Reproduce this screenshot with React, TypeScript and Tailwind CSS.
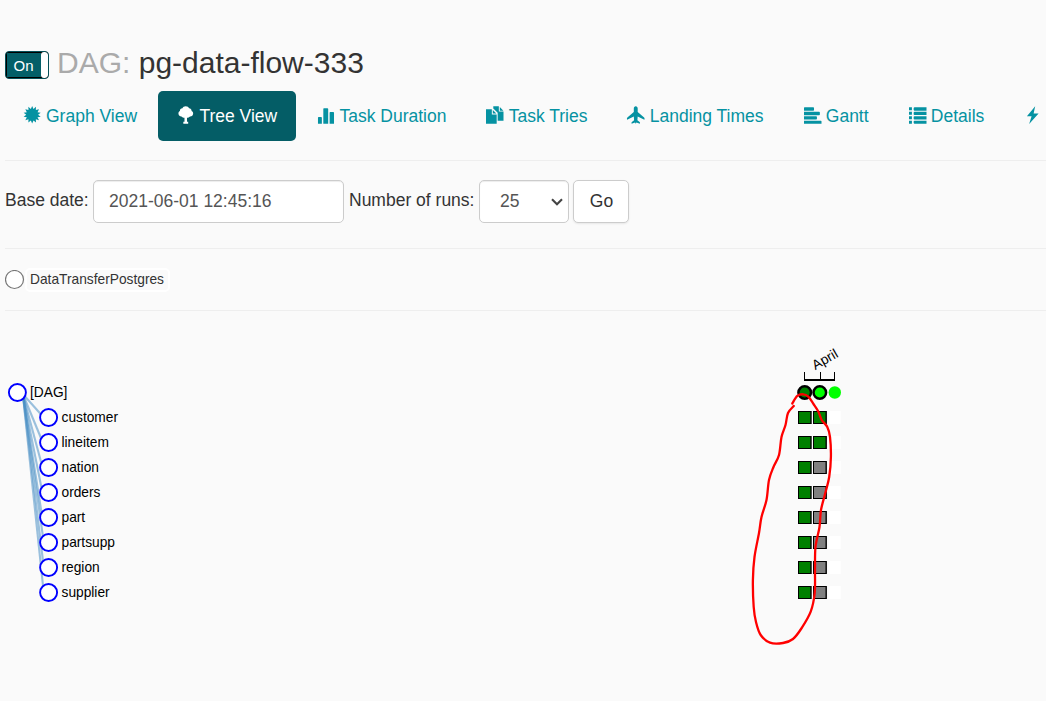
import React from "react";

const star = Array.from({ length: 28 }, (_, i) => {
  const r = i % 2 ? 6.1 : 9;
  const a = (i * Math.PI) / 14;
  return `${(8.4 + r * Math.sin(a)).toFixed(2)},${(8.7 - r * Math.cos(a)).toFixed(2)}`;
}).join(" ");

const icons: Record<string, React.ReactNode> = {
  graph: <polygon points={star} />,
  tree: (
    <path d="M9 0c1.700 0 3 .9 3.400 2.100 1.700.1 2.800 1.400 2.600 2.900 1.300.6 1.900 1.800 1.500 3.200-.4 1.500-1.700 2.400-3.100 2.300-.9.9-1.900 1.300-3.100 1.300v4.200h1.200V18H6.500v-2h1.200v-4.200c-1.200 0-2.300-.4-3.100-1.300C3.100 10.600 2 9.700 1.600 8.300 1.200 6.900 1.800 5.600 3 5 2.800 3.400 4 2.100 5.600 2.100 6 .9 7.300 0 9 0z" />
  ),
  duration: (
    <path d="M1.900 11h2.300a.8.800 0 0 1 .8.800V18H1v-6.200a.8.8 0 0 1 .9-.8zM7.500 2h3.200a.8.800 0 0 1 .8.800V18h-5V2.800a.8.800 0 0 1 1-.8zM14 6h2.700a.8.800 0 0 1 .8.800V18H13V6.800a.8.800 0 0 1 1-.8z" />
  ),
  tries: (
    <path d="M0 3h6v5.500h5V18H0zM7 3.800 10.600 7.500H7zM7.500 0h5.700v5.500H18V15h-6V6.800L7.500 2.200zM14.200.7 17.900 4.500h-3.700z" />
  ),
  landing: (
    <path d="M9 0c1.300 0 1.900 1 2 2.300V6l6.600 5.600c.5.4.6 1.300.3 2.300L11 10.600l-.3 3.800 2.600 2.100V18L9.700 16.600 9 18l-.7-1.400L4.700 18v-1.500l2.600-2.100-.3-3.800-6.900 3.300c-.3-1-.2-1.900.3-2.300L7 6V2.300C7.100 1 7.700 0 9 0z" />
  ),
  gantt: (
    <path d="M.5 1h9a.8.800 0 0 1 .8.800v2a.8.800 0 0 1-.8.800h-9A.5.5 0 0 1 0 4V1.500A.5.500 0 0 1 .5 1zM0 5.600h15.500a.8.800 0 0 1 .8.800v2a.8.800 0 0 1-.8.800H0zM0 10.300h12.500a.8.800 0 0 1 .8.800v1.800a.8.800 0 0 1-.8.800H0zM0 14.800h17.300a.7.700 0 0 1 .7.700V18H0z" />
  ),
  details: (
    <path d="M0 1h3v3H0zM0 5.700h3v3H0zM0 10.300h3v3H0zM0 15h3v3H0zM5.500 1h12.500v3.500H5.500l-.7-.7V1.700zM5.500 5.600h12.500v3.500H5.500l-.7-.7V6.300zM5.500 10.200h12.500v3.500H5.500l-.7-.7v-2.100zM5.500 14.800h12.500v3.200H5.500l-.7-.7v-1.800z" />
  ),
  flash: <path d="M11.500 0 3 10.300h4.800L5.300 18.300 15 7.500H9.900z" />,
};

function Icon({ name }: { name: string }) {
  return (
    <svg viewBox="0 0 18 18" className="mb-[3px] h-[18px] w-[17.5px] shrink-0 overflow-visible fill-current">
      {icons[name]}
    </svg>
  );
}

const tabs = [
  ["graph", "Graph View"],
  ["tree", "Tree View"],
  ["duration", "Task Duration"],
  ["tries", "Task Tries"],
  ["landing", "Landing Times"],
  ["gantt", "Gantt"],
  ["details", "Details"],
  ["flash", ""],
];

const tasks = ["customer", "lineitem", "nation", "orders", "part", "partsupp", "region", "supplier"];

const markPoints = [
  [792.3, 403.5], [797.3, 395.9], [803.3, 394.3], [808.3, 396.7], [813.5, 404], [818.3, 411.5],
  [821.7, 420], [827.3, 427], [830, 437], [830.9, 457], [829.2, 477], [825.3, 493], [821, 510],
  [819.5, 527], [815.5, 547], [815, 570], [814.7, 593], [810.7, 611.7], [801.7, 628], [793, 639],
  [783, 643], [770, 642.7], [760.7, 635], [756, 622], [753.7, 607], [752.9, 580], [754.5, 557],
  [759, 533], [761.5, 517], [766.5, 500], [769, 480], [773.5, 467], [779, 455], [781.5, 437],
  [785.5, 425], [788, 413], [793.7, 406],
];

// Catmull-Rom spline through the freehand points
const markPath = markPoints.reduce((d, p, i, all) => {
  if (i === 0) return `M${p[0]} ${p[1]}`;
  const a = all[i - 1];
  const before = all[Math.max(i - 2, 0)];
  const after = all[Math.min(i + 1, all.length - 1)];
  return `${d}C${a[0] + (p[0] - before[0]) / 6} ${a[1] + (p[1] - before[1]) / 6} ${p[0] - (after[0] - a[0]) / 6} ${p[1] - (after[1] - a[1]) / 6} ${p[0]} ${p[1]}`;
}, "");

function Tree() {
  return (
    <svg width="1046" height="390" viewBox="0 311 1046 390" className="block" fontSize="13.75">
      <g stroke="#4a90c4" strokeOpacity="0.55" strokeWidth="2.100">
        {tasks.map((t, i) => (
          <line key={t} x1="22.800" y1="394" x2={i > 4 ? 43.500 : 42} y2={415.5 + i * 25} />
        ))}
      </g>
      <g fill="#fff" stroke="#0000ff" strokeWidth="1.900">
        <circle cx="17.400" cy="392.500" r="8.500" />
        {tasks.map((t, i) => (
          <circle key={t} cx="48.600" cy={417.5 + i * 25} r="8.500" />
        ))}
      </g>
      <g fill="#000">
        <text x="30" y="397">[DAG]</text>
        {tasks.map((t, i) => (
          <text key={t} x="61.500" y={422 + i * 25}>{t}</text>
        ))}
        <text transform="translate(815.200 370.200) rotate(-30)">April</text>
      </g>
      <path d="M804.500 372v8h30V372M820.500 372v8" fill="none" stroke="#000" strokeWidth="1" />
      <path d="M804 380h31" stroke="#000" strokeWidth="2" />
      <circle cx="804.700" cy="392.500" r="6.300" fill="#008000" stroke="#000" strokeWidth="2.500" />
      <circle cx="819.800" cy="392.500" r="6.300" fill="#00ff00" stroke="#000" strokeWidth="2.500" />
      <circle cx="834.800" cy="392.500" r="6.200" fill="#00ff00" />
      {tasks.map((t, i) => {
        const y = 411 + i * 25;
        return (
          <g key={t}>
            <rect x="798" y={y} width="13.700" height="13" fill="#000" />
            <rect x="799" y={y + 1} width="11.300" height="11" fill="#008000" />
            <rect x="813" y={y} width="13.900" height="13" fill="#000" />
            <rect x="814" y={y + 1} width="11.500" height="11" fill={i < 2 ? "#008000" : "#808080"} />
            <rect x="828.500" y={y} width="12.300" height="13" fill="#fff" />
          </g>
        );
      })}
      <path
        d={markPath}
        fill="none"
        stroke="#ff0000"
        strokeWidth="2.300"
        strokeLinecap="round"
        strokeLinejoin="round"
      />
    </svg>
  );
}

export default function App() {
  return (
    <div className="h-[701px] w-full overflow-hidden bg-[#fafafa] font-['Liberation_Sans',Arial,sans-serif] text-[17.5px] leading-[25px] text-[#333]">
      <header className="flex h-[91px] pt-[42px] pl-[5px]">
        <button className="mt-[9px] flex h-7 w-11 shrink-0 overflow-hidden rounded-[4px] border border-[#044f57] bg-black">
          <span className="my-px ml-px h-6 w-[33.5px] bg-[#045f68] pl-[6.5px] text-left text-[15px] leading-[26px] text-white">On</span>
          <span className="h-[26px] w-[7px] shrink-0 rounded-[3px] bg-white" />
        </button>
        <h1 className="ml-2 text-[30px] leading-[41px] whitespace-pre">
          <span className="text-[#aaa]">DAG:</span> pg-data-flow-333
        </h1>
      </header>

      <nav className="flex h-[69px] gap-[2.5px] overflow-hidden pl-[5px]">
        {tabs.map(([icon, label]) => (
          <a
            key={icon}
            className={`flex h-[50px] shrink-0 items-center gap-[4.75px] rounded-[5px] px-[18.75px] whitespace-nowrap ${
              icon === "tree" ? "bg-[#045d66] text-white" : "text-[#0592a2]"
            }`}
          >
            <Icon name={icon} />
            <span>{label}</span>
          </a>
        ))}
      </nav>

      <form className="ml-[5px] flex h-[88px] border-t border-[#eee] pt-[19px]">
        <label className="mt-2 w-[88px]">Base date:</label>
        <div className="h-[43px] w-[251px] rounded-[5px] border border-[#ccc] bg-white pt-2 pl-[15px] text-[#555] shadow-[inset_0_1px_1px_rgba(0,0,0,.075)]">
          2021-06-01 12:45:16
        </div>
        <label className="mt-2 w-[135px] pl-[5px]">Number of runs:</label>
        <div className="flex h-[43px] w-[90px] items-center justify-between rounded-[5px] border border-[#ccc] bg-white pr-[5px] pb-px pl-5 text-[#555] shadow-[inset_0_1px_1px_rgba(0,0,0,.075)]">
          25
          <svg width="12" height="8" viewBox="0 0 12 8" className="mt-px">
            <path d="M1 1.300 6 6.300 11 1.300" fill="none" stroke="#444" strokeWidth="2.100" />
          </svg>
        </div>
        <button type="button" className="ml-1 h-[43px] w-14 rounded-[5px] border border-[#ccc] bg-white pb-px pl-px shadow-[0_1px_2px_rgba(0,0,0,.08)]">
          Go
        </button>
      </form>

      <section className="ml-[5px] flex h-[62px] items-center border-t border-[#eee] text-[13.75px]">
        <svg width="20" height="20" viewBox="0 0 20 20">
          <circle cx="9.500" cy="9.500" r="9" fill="#fff" stroke="#777" strokeWidth="1.200" />
        </svg>
        <span className="h-6 rounded-[5px] border-2 border-white pr-[3.5px] pl-[3px] leading-[20px]">DataTransferPostgres</span>
      </section>

      <main>
        <hr className="ml-[5px] border-[#eee]" />
        <Tree />
      </main>
    </div>
  );
}
